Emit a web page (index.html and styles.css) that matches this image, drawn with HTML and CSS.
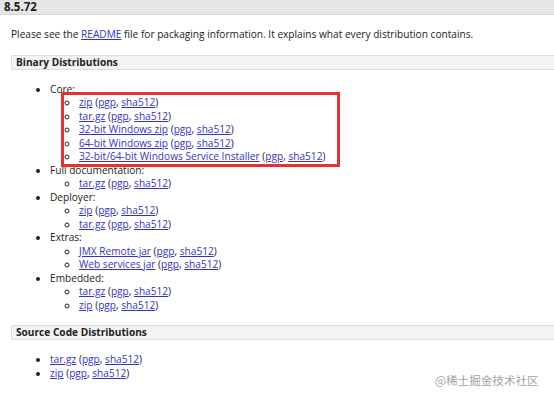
FILE: index.html
```html
<!DOCTYPE html>
<html lang="en">
  <head>
    <meta charset="UTF-8" />
    <meta name="viewport" content="width=device-width, initial-scale=1.0" />
    <title>Tomcat 8.5.72</title>
    <link rel="stylesheet" href="styles.css">
  </head>
  <body>
    <h3 class="release">8.5.72</h3>

    <div class="content">
      <p class="intro">
        Please see the <a href="#">README</a> file for packaging information. It explains what every distribution contains.
      </p>

      <h4 class="section">Binary Distributions</h4>
      <ul class="outer">
        <li>Core:
          <ul class="inner">
            <li><a href="#">zip</a> (<a href="#">pgp</a>, <a href="#">sha512</a>)</li>
            <li><a href="#">tar.gz</a> (<a href="#">pgp</a>, <a href="#">sha512</a>)</li>
            <li><a href="#">32-bit Windows zip</a> (<a href="#">pgp</a>, <a href="#">sha512</a>)</li>
            <li><a href="#">64-bit Windows zip</a> (<a href="#">pgp</a>, <a href="#">sha512</a>)</li>
            <li><a href="#">32-bit/64-bit Windows Service Installer</a> (<a href="#">pgp</a>, <a href="#">sha512</a>)</li>
          </ul>
        </li>
        <li>Full documentation:
          <ul class="inner">
            <li><a href="#">tar.gz</a> (<a href="#">pgp</a>, <a href="#">sha512</a>)</li>
          </ul>
        </li>
        <li>Deployer:
          <ul class="inner">
            <li><a href="#">zip</a> (<a href="#">pgp</a>, <a href="#">sha512</a>)</li>
            <li><a href="#">tar.gz</a> (<a href="#">pgp</a>, <a href="#">sha512</a>)</li>
          </ul>
        </li>
        <li>Extras:
          <ul class="inner">
            <li><a href="#">JMX Remote jar</a> (<a href="#">pgp</a>, <a href="#">sha512</a>)</li>
            <li><a href="#">Web services jar</a> (<a href="#">pgp</a>, <a href="#">sha512</a>)</li>
          </ul>
        </li>
        <li>Embedded:
          <ul class="inner">
            <li><a href="#">tar.gz</a> (<a href="#">pgp</a>, <a href="#">sha512</a>)</li>
            <li><a href="#">zip</a> (<a href="#">pgp</a>, <a href="#">sha512</a>)</li>
          </ul>
        </li>
      </ul>

      <h4 class="section">Source Code Distributions</h4>
      <ul class="outer">
        <li><a href="#">tar.gz</a> (<a href="#">pgp</a>, <a href="#">sha512</a>)</li>
        <li><a href="#">zip</a> (<a href="#">pgp</a>, <a href="#">sha512</a>)</li>
      </ul>
    </div>

    <!-- аннотация поверх скриншота -->
    <div class="highlight"></div>
    <div class="watermark">@稀土掘金技术社区</div>
  </body>
</html>
```

FILE: styles.css
```css
* {
  box-sizing: border-box;
  margin: 0;
  padding: 0;
}

body {
  font-family: "Open Sans", "Liberation Sans", sans-serif;
  font-size: 10.15px;
  line-height: 13.5px;
  color: #222;
  background: #fff;
}

a {
  color: #3434c4;
}

.release {
  height: 15px;
  padding: 0 4px;
  background: #e6e6e6;
  border-bottom: 1px solid #d6d6d6;
  font-size: 11.5px;
  line-height: 14px;
  font-weight: bold;
}

.content {
  padding-left: 11px;
}

.intro {
  margin-top: 13px;
}

.section {
  margin-top: 13px;
  height: 15px;
  padding: 0 4px;
  background: #f3f3f3;
  border: 1px solid #dcdcdc;
  border-right: none;
  border-radius: 2px 0 0 2px;
  font-size: 10.15px;
  line-height: 13px;
  font-weight: bold;
}

.outer {
  margin: 13px 0;
  padding-left: 39px;
  list-style: disc;
}

.inner {
  padding-left: 29px;
  list-style: circle;
}

.highlight {
  position: absolute;
  left: 61px;
  top: 92px;
  width: 279px;
  height: 75px;
  border: 3px solid #e8312e;
}

.watermark {
  position: absolute;
  left: 435px;
  top: 373px;
  font-family: "Noto Sans CJK SC", sans-serif;
  font-size: 11.6px;
  line-height: 14px;
  color: #a4a4a4;
}
```
